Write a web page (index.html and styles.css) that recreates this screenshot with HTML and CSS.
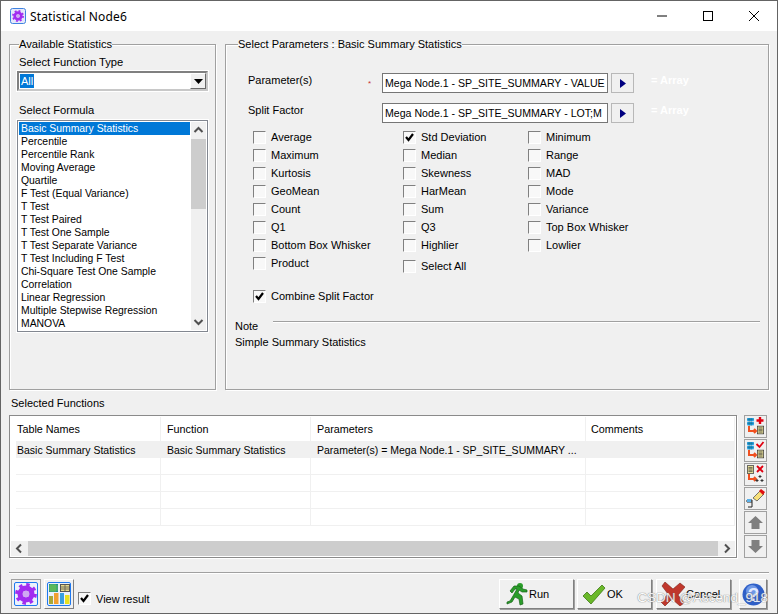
FILE: index.html
```html
<!DOCTYPE html>
<html lang="en">
<head>
<meta charset="utf-8">
<title>Statistical Node6</title>
<link rel="stylesheet" href="styles.css">
</head>
<body>
<svg class="defs" width="0" height="0">
  <defs>
    <symbol id="gear" viewBox="0 0 24 24">
      <circle cx="12" cy="12" r="10.200" fill="none" stroke="#a22cf0" stroke-width="3.400" stroke-dasharray="3.800 4.200"/>
      <circle cx="12" cy="12" r="6.400" fill="none" stroke="#a22cf0" stroke-width="5.800"/>
      <circle cx="12" cy="12" r="3.600" fill="#cfa8f2"/>
    </symbol>
    <symbol id="mini-table" viewBox="0 0 10 12">
      <rect x="0.5" y="0.5" width="9" height="11" fill="#f2e9a0" stroke="#333"/>
      <path d="M2 3h6M2 5h6M2 7h6M2 9h6" stroke="#333" stroke-width="1"/>
    </symbol>
    <symbol id="mini-blue" viewBox="0 0 10 12">
      <rect width="10" height="5" fill="#20a0e8"/>
      <rect y="6" width="10" height="5" fill="#20a0e8"/>
      <path d="M0 2h10M0 8h10M3 0v12M6 0v12" stroke="#155" stroke-width="0.6"/>
    </symbol>
  </defs>
</svg>
<div class="window">
  <header class="titlebar">
    <svg class="title-icon" viewBox="0 0 16 16"><rect x="0.5" y="0.5" width="15" height="15" rx="2" fill="#e4e8fa" stroke="#3f83e0"/><use href="#gear" x="2" y="2" width="12" height="12"/></svg>
    <span class="title-text">Statistical Node6</span>
    <div class="win-controls">
      <svg viewBox="0 0 46 30" class="win-btn"><path d="M18 15h10" stroke="#000"/></svg>
      <svg viewBox="0 0 46 30" class="win-btn"><rect x="18.5" y="10.500" width="9" height="9" fill="none" stroke="#000"/></svg>
      <svg viewBox="0 0 46 30" class="win-btn"><path d="M18 10l10 10M28 10l-10 10" stroke="#000"/></svg>
    </div>
  </header>
  <main class="client">
    <div class="top-row">
      <fieldset class="group">
        <legend>Available Statistics</legend>
        <div class="field-label">Select Function Type</div>
        <div class="combo"><span class="combo-sel">All</span><span class="combo-btn"><svg width="9" height="5" viewBox="0 0 9 5"><path d="M0 0h9L4.500 5z" fill="#000"/></svg></span></div>
        <div class="field-label formula-label">Select Formula</div>
        <div class="listbox">
          <ul class="list-items">
            <li class="is-selected">Basic Summary Statistics</li>
            <li>Percentile</li>
            <li>Percentile Rank</li>
            <li>Moving Average</li>
            <li>Quartile</li>
            <li>F Test (Equal Variance)</li>
            <li>T Test</li>
            <li>T Test Paired</li>
            <li>T Test One Sample</li>
            <li>T Test Separate Variance</li>
            <li>T Test Including F Test</li>
            <li>Chi-Square Test One Sample</li>
            <li>Correlation</li>
            <li>Linear Regression</li>
            <li>Multiple Stepwise Regression</li>
            <li>MANOVA</li>
          </ul>
          <div class="vscroll">
            <svg class="vscroll-arrow" width="15" height="17" viewBox="0 0 15 17"><path d="M3.500 10l4-4 4 4" fill="none" stroke="#505050" stroke-width="2"/></svg>
            <div class="vscroll-track"><div class="vscroll-thumb"></div></div>
            <svg class="vscroll-arrow" width="15" height="17" viewBox="0 0 15 17"><path d="M3.500 7l4 4 4-4" fill="none" stroke="#505050" stroke-width="2"/></svg>
          </div>
        </div>
      </fieldset>
      <fieldset class="group">
        <legend>Select Parameters : Basic Summary Statistics</legend>
        <div class="param-row">
          <span class="param-label">Parameter(s)</span>
          <span class="param-req">*</span>
          <div class="param-input">Mega Node.1 - SP_SITE_SUMMARY - VALUE</div>
          <span class="param-btn"><svg width="6" height="9" viewBox="0 0 6 9"><path d="M0 0l6 4.500L0 9z" fill="#000080"/></svg></span>
          <span class="param-array">= Array</span>
        </div>
        <div class="param-row param-row-second">
          <span class="param-label">Split Factor</span>
          <span class="param-req"></span>
          <div class="param-input">Mega Node.1 - SP_SITE_SUMMARY - LOT;M</div>
          <span class="param-btn"><svg width="6" height="9" viewBox="0 0 6 9"><path d="M0 0l6 4.500L0 9z" fill="#000080"/></svg></span>
          <span class="param-array">= Array</span>
        </div>
        <div class="check-columns">
          <div class="check-col col-a">
            <label class="check"><i class="box"></i>Average</label>
            <label class="check"><i class="box"></i>Maximum</label>
            <label class="check"><i class="box"></i>Kurtosis</label>
            <label class="check"><i class="box"></i>GeoMean</label>
            <label class="check"><i class="box"></i>Count</label>
            <label class="check"><i class="box"></i>Q1</label>
            <label class="check"><i class="box"></i>Bottom Box Whisker</label>
            <label class="check"><i class="box"></i>Product</label>
          </div>
          <div class="check-col col-b">
            <label class="check"><i class="box"><svg width="11" height="11" viewBox="0 0 11 11"><path d="M2 5l2.500 3L9 2" fill="none" stroke="#000" stroke-width="2.200"/></svg></i>Std Deviation</label>
            <label class="check"><i class="box"></i>Median</label>
            <label class="check"><i class="box"></i>Skewness</label>
            <label class="check"><i class="box"></i>HarMean</label>
            <label class="check"><i class="box"></i>Sum</label>
            <label class="check"><i class="box"></i>Q3</label>
            <label class="check"><i class="box"></i>Highlier</label>
            <label class="check check-all"><i class="box"></i>Select All</label>
          </div>
          <div class="check-col">
            <label class="check"><i class="box"></i>Minimum</label>
            <label class="check"><i class="box"></i>Range</label>
            <label class="check"><i class="box"></i>MAD</label>
            <label class="check"><i class="box"></i>Mode</label>
            <label class="check"><i class="box"></i>Variance</label>
            <label class="check"><i class="box"></i>Top Box Whisker</label>
            <label class="check"><i class="box"></i>Lowlier</label>
          </div>
        </div>
        <label class="check combine"><i class="box"><svg width="11" height="11" viewBox="0 0 11 11"><path d="M2 5l2.500 3L9 2" fill="none" stroke="#000" stroke-width="2.200"/></svg></i>Combine Split Factor</label>
        <div class="note-head"><span>Note</span><div class="note-line"></div></div>
        <div class="note-text">Simple Summary Statistics</div>
      </fieldset>
    </div>
    <div class="selected-label">Selected Functions</div>
    <div class="selected-row">
      <div class="grid">
        <div class="grid-body">
          <div class="g-row g-head"><span>Table Names</span><span>Function</span><span>Parameters</span><span>Comments</span></div>
          <div class="g-row g-sel"><span>Basic Summary Statistics</span><span>Basic Summary Statistics</span><span>Parameter(s) = Mega Node.1 - SP_SITE_SUMMARY ...</span><span></span></div>
          <div class="g-row"><span></span><span></span><span></span><span></span></div>
          <div class="g-row"><span></span><span></span><span></span><span></span></div>
          <div class="g-row"><span></span><span></span><span></span><span></span></div>
          <div class="g-row"><span></span><span></span><span></span><span></span></div>
        </div>
        <div class="hscroll">
          <svg width="17" height="15" viewBox="0 0 17 15"><path d="M10 3.500l-4 4 4 4" fill="none" stroke="#505050" stroke-width="2"/></svg>
          <div class="hscroll-thumb"></div>
          <svg width="17" height="15" viewBox="0 0 17 15"><path d="M7 3.500l4 4-4 4" fill="none" stroke="#505050" stroke-width="2"/></svg>
        </div>
      </div>
      <div class="side-tools">
        <span class="tool"><svg width="19" height="19" viewBox="0 0 19 19"><use href="#mini-blue" x="1" y="1" width="7" height="8"/><use href="#mini-table" x="11" y="8" width="7" height="10"/><path d="M3 9v5h7M8 12l2 2-2 2" fill="none" stroke="#f05020" stroke-width="2"/><path d="M14 0v7M10.500 3.500h7" stroke="#e00010" stroke-width="2.400"/></svg></span>
        <span class="tool"><svg width="19" height="19" viewBox="0 0 19 19"><use href="#mini-blue" x="1" y="1" width="7" height="8"/><use href="#mini-table" x="11" y="8" width="7" height="10"/><path d="M3 9v5h7M8 12l2 2-2 2" fill="none" stroke="#f05020" stroke-width="2"/><path d="M10.500 3l3 3 4-5" fill="none" stroke="#e00010" stroke-width="1.800"/></svg></span>
        <span class="tool"><svg width="19" height="19" viewBox="0 0 19 19"><use href="#mini-table" x="1" y="0" width="7" height="9"/><path d="M3 9v5h7M8 12l2 2-2 2" fill="none" stroke="#f05020" stroke-width="2"/><path d="M11 1l6 6M17 1l-6 6" stroke="#e00010" stroke-width="1.800"/><path d="M14 10v3M12.500 11.500h3M11 14v3M9.500 15.500h3M16 14v3M14.500 15.500h3" stroke="#333" stroke-width="1"/></svg></span>
        <span class="tool"><svg width="19" height="19" viewBox="0 0 19 19"><path d="M7 9l7-7 4 3-7 7z" fill="#f7e07a" stroke="#555" stroke-width="0.800"/><path d="M13 2l2-2 4 3-2 3z" fill="#e01010"/><path d="M1 11h5v2H1zM6 13v5H2" fill="none" stroke="#222"/><rect x="1" y="10" width="4" height="3" fill="#5bb0e8"/></svg></span>
        <span class="tool"><svg width="15" height="13" viewBox="0 0 15 13"><path d="M7.500 0L15 7h-3.500v6h-8V7H0z" fill="#7f7f7f"/></svg></span>
        <span class="tool"><svg width="15" height="13" viewBox="0 0 15 13"><path d="M7.500 13L15 6h-3.500V0h-8v6H0z" fill="#7f7f7f"/></svg></span>
      </div>
    </div>
    <footer class="footer">
      <span class="icon-btn icon-btn-flat"><span class="icon-frame"><svg width="22" height="22" viewBox="0 0 24 24"><use href="#gear" width="24" height="24"/></svg></span></span>
      <span class="icon-btn"><span class="icon-frame"><svg width="22" height="22" viewBox="0 0 22 22"><rect x="1" y="1" width="9" height="8" fill="#1e8f8f"/><path d="M1 3h9M1 5h9M1 7h9M3 1v8M5 1v8M7 1v8" stroke="#7fd040" stroke-width="0.800"/><rect x="12.500" y="1.500" width="9" height="7" fill="#e6d98a" stroke="#555"/><path d="M13 4h8M13 6h8M17 2v6" stroke="#555" stroke-width="0.800"/><rect x="1" y="13" width="4" height="8" fill="#a8a838"/><rect x="6" y="10" width="4.500" height="11" fill="#f0a030"/><rect x="12" y="10" width="4" height="11" fill="#38a0e0"/><rect x="17" y="12" width="4.500" height="9" fill="#e8e020"/></svg></span></span>
      <label class="check view-result"><i class="box"><svg width="11" height="11" viewBox="0 0 11 11"><path d="M2 5l2.500 3L9 2" fill="none" stroke="#000" stroke-width="2.200"/></svg></i>View result</label>
      <div class="footer-actions">
        <button class="action action-run" type="button"><svg width="24" height="24" viewBox="0 0 24 24"><circle cx="16" cy="4" r="3" fill="#2a9d2a"/><path d="M3 22l5-2 3-5 4 2 1 6 3-1-1-8-4-3 1-3 3 2 5 0v-2l-4-1-4-3-5 0-4 5 2 2 3-4 2 0-4 7-3 5-3 1z" fill="#2a9d2a" stroke="#176317" stroke-width="0.700"/></svg>Run</button>
        <button class="action action-ok" type="button"><svg width="24" height="24" viewBox="0 0 24 24"><path d="M1 14l4-4 4 4L20 3l3 3L9 22z" fill="#6ab82a" stroke="#3d7a14" stroke-width="0.800"/></svg>OK</button>
        <button class="action action-cancel" type="button"><svg width="24" height="24" viewBox="0 0 24 24"><path d="M4 0l8 7 7-6 5 4-7 8 6 8-4 3-8-7-7 7-4-4 7-8-6-8z" fill="#c0372c" stroke="#7a2018" stroke-width="0.600"/></svg>Cancel</button>
        <span class="action action-help"><svg width="23" height="23" viewBox="0 0 23 23"><circle cx="11.500" cy="11.500" r="11" fill="#2e5fc8"/><circle cx="10" cy="8" r="6" fill="#6f97e6"/><text x="11.500" y="18" class="help-mark">?</text></svg></span>
      </div>
      <span class="watermark">CSDN @Ascend_918</span>
    </footer>
  </main>
</div>
</body>
</html>
```
FILE: styles.css
```css
* { box-sizing: border-box; }
html, body { margin: 0; padding: 0; }
body {
  width: 778px;
  height: 614px;
  overflow: hidden;
  font-family: "Liberation Sans", Arial, sans-serif;
  font-size: 11px;
  color: #000;
  background: #f0f0f0;
}
.defs { position: absolute; }
.window {
  width: 778px;
  height: 614px;
  border: 1px solid #646464;
  display: flex;
  flex-direction: column;
  background: #f0f0f0;
}
.titlebar {
  height: 30px;
  background: #fff;
  display: flex;
  align-items: center;
  flex: none;
}
.title-icon { width: 16px; height: 16px; margin-left: 9px; }
.title-text { margin-left: 4px; font-family: "Noto Sans", sans-serif; font-size: 12px; letter-spacing: 0.15px; }
.win-controls { margin-left: auto; display: flex; margin-right: 0; }
.win-btn { width: 46px; height: 30px; }
.client { flex: 1; position: relative; padding: 0 8px; }
.top-row { display: grid; grid-template-columns: 207px 544px; column-gap: 9px; margin-top: 7px; height: 352px; }
.group {
  margin: 0;
  padding: 0 7px;
  min-width: 0;
  border: 1px solid #a0a0a0;
  box-shadow: 1px 1px 0 #fff, inset 1px 1px 0 #fff;
  position: relative;
}
.group legend { padding: 0; margin-left: 2px; line-height: 13px; font-size: 11.2px; }
.group + .group { padding: 0 9px; }
.group + .group legend { margin-left: 3px; font-size: 11px; }
.field-label { line-height: 13px; margin-top: 5px; padding-left: 2px; font-size: 11.2px; }
.combo {
  height: 20px;
  margin-top: 2px;
  background: #fff;
  border: 2px solid;
  border-color: #808080 #c8c8c8 #c8c8c8 #808080;
  outline: 1px solid #fff;
  display: flex;
  align-items: center;
  justify-content: space-between;
}
.combo-sel { background: #0078d7; color: #fff; padding: 0 1px; line-height: 14px; margin-left: 1px; }
.combo-btn {
  width: 16px;
  height: 16px;
  background: #f0f0f0;
  border: 1px solid;
  border-color: #fff #696969 #696969 #fff;
  display: flex;
  align-items: center;
  justify-content: center;
}
.formula-label { margin-top: 13px; }
.listbox {
  margin-top: 3px;
  height: 212px;
  background: #fff;
  border: 1px solid #828790;
  box-shadow: 0 0 0 1px #fff;
  padding: 1px;
  display: flex;
  overflow: hidden;
}
.list-items { list-style: none; margin: 0; padding: 0; width: 171px; flex: none; font-size: 10.4px; }
.list-items li { height: 13px; line-height: 13px; padding-left: 2px; white-space: nowrap; }
.list-items .is-selected { background: #0078d7; color: #fff; }
.vscroll { flex: 1; display: flex; flex-direction: column; background: #f0f0f0; margin-left: 1px; }
.vscroll-track { flex: 1; }
.vscroll-thumb { height: 70px; background: #cdcdcd; }
.vscroll-arrow { flex: none; }
.param-row { display: flex; align-items: flex-start; height: 20px; margin-top: 22px; }
.param-row-second { margin-top: 10px; }
.param-label { width: 120px; margin-left: 13px; padding-top: 1px; line-height: 13px; }
.param-req { width: 14px; color: #c83030; font-size: 8px; line-height: 20px; padding-top: 1px; }
.param-input {
  width: 226px;
  height: 20px;
  background: #fff;
  border: 1px solid #767676;
  line-height: 18px;
  padding-left: 2px;
  font-size: 10.6px;
  white-space: nowrap;
  overflow: hidden;
}
.param-btn {
  width: 23px;
  height: 20px;
  margin-left: 3px;
  border: 1px solid #b8b8b8;
  display: flex;
  align-items: center;
  justify-content: center;
}
.param-array { margin-left: 17px; padding-top: 1px; color: #fff; font-weight: bold; line-height: 13px; }
.check-columns { display: flex; margin-top: 5px; margin-left: 18px; }
.check-col { display: flex; flex-direction: column; }
.col-a { width: 150px; }
.col-b { width: 125px; }
.check { display: flex; align-items: center; height: 18px; white-space: nowrap; }
.box {
  width: 13px;
  height: 13px;
  background: #f8f8f8;
  border: 1px solid;
  border-color: #808080 #fff #fff #808080;
  margin-right: 5px;
  display: flex;
  flex: none;
  align-items: center;
  justify-content: center;
}
.check-all { margin-top: 3px; }
.combine { margin-top: 12px; margin-left: 18px; }
.note-head { display: flex; margin-top: 15px; line-height: 13px; }
.note-line { flex: 1; height: 1px; background: #a0a0a0; margin: 1px -1px 0 15px; box-shadow: 0 1px 0 #fff; }
.note-text { line-height: 13px; margin-top: 3px; }
.selected-label { margin: 7px 0 0 2px; line-height: 13px; }
.selected-row { display: flex; margin-top: 5px; height: 143px; }
.grid {
  width: 728px;
  border: 1px solid #8a8a8a;
  box-shadow: 1px 1px 0 #fff;
  background: #fff;
  padding: 1px;
  display: flex;
  flex-direction: column;
}
.grid-body { flex: 1; overflow: hidden; }
.g-row {
  display: grid;
  grid-template-columns: 145px 150px 275px 1fr;
  height: 17px;
  line-height: 18px;
  margin-left: 5px;
  font-size: 10.5px;
  border-bottom: 1px solid #f0f0f0;
}
.g-row span { padding-left: 6px; border-right: 1px solid #f0f0f0; white-space: nowrap; overflow: hidden; }
.g-row span:first-child { padding-left: 1px; }
.g-head { height: 24px; line-height: 24px; border-bottom: 0; font-size: 10.8px; }
.g-head span:last-child { padding-left: 5px; }
.g-sel { background: #f0f0f0; }
.hscroll { height: 15px; flex: none; display: flex; background: #f0f0f0; }
.hscroll-thumb { flex: 1; background: #cdcdcd; }
.side-tools { margin-left: 7px; display: flex; flex-direction: column; gap: 1px; }
.tool {
  width: 23px;
  height: 23px;
  border: 1px solid #a0a0a0;
  display: flex;
  align-items: center;
  justify-content: center;
}
.footer {
  margin-top: 14px;
  border-top: 1px solid #a0a0a0;
  box-shadow: inset 0 1px 0 #fff;
  padding: 6px 2px 0;
  display: flex;
  align-items: flex-start;
  position: relative;
}
.icon-btn {
  width: 30px;
  height: 30px;
  margin-right: 3px;
  background: #f0f0f0;
  border: 1px solid;
  border-color: #fff #808080 #808080 #fff;
  display: flex;
  align-items: center;
  justify-content: center;
}
.icon-btn-flat { border-color: #a0a0a0; }
.icon-frame {
  width: 24px;
  height: 24px;
  border: 1px solid #1e78f0;
  border-radius: 2px;
  background: #eaf1fc;
  display: flex;
  align-items: center;
  justify-content: center;
}
.view-result { margin: 10px 0 0 1px; padding-top: 1px; }
.footer-actions { margin-left: auto; margin-right: 0; display: flex; }
.action {
  width: 75px;
  height: 30px;
  padding: 0 0 0 4px;
  background: #f0f0f0;
  border: 1px solid;
  border-color: #fff #808080 #808080 #fff;
  box-shadow: 1px 1px 0 #a0a0a0;
  font: inherit;
  font-size: 11px;
  color: #000;
  display: flex;
  align-items: center;
  gap: 1px;
}
.action-ok { margin-left: 3px; }
.action-cancel { margin-left: 4px; }
.action-help { width: 28px; margin-left: 8px; justify-content: center; padding: 0; }
.help-mark { font-size: 19px; font-weight: bold; fill: #dfe8ff; text-anchor: middle; font-family: "Liberation Sans", sans-serif; }
.watermark {
  position: absolute;
  right: 1px;
  top: 17px;
  font-size: 13.5px;
  color: #fff;
  opacity: 0.85;
  text-shadow: 0 0 1px #777, 0 0 1px #777;
  white-space: nowrap;
}
```
